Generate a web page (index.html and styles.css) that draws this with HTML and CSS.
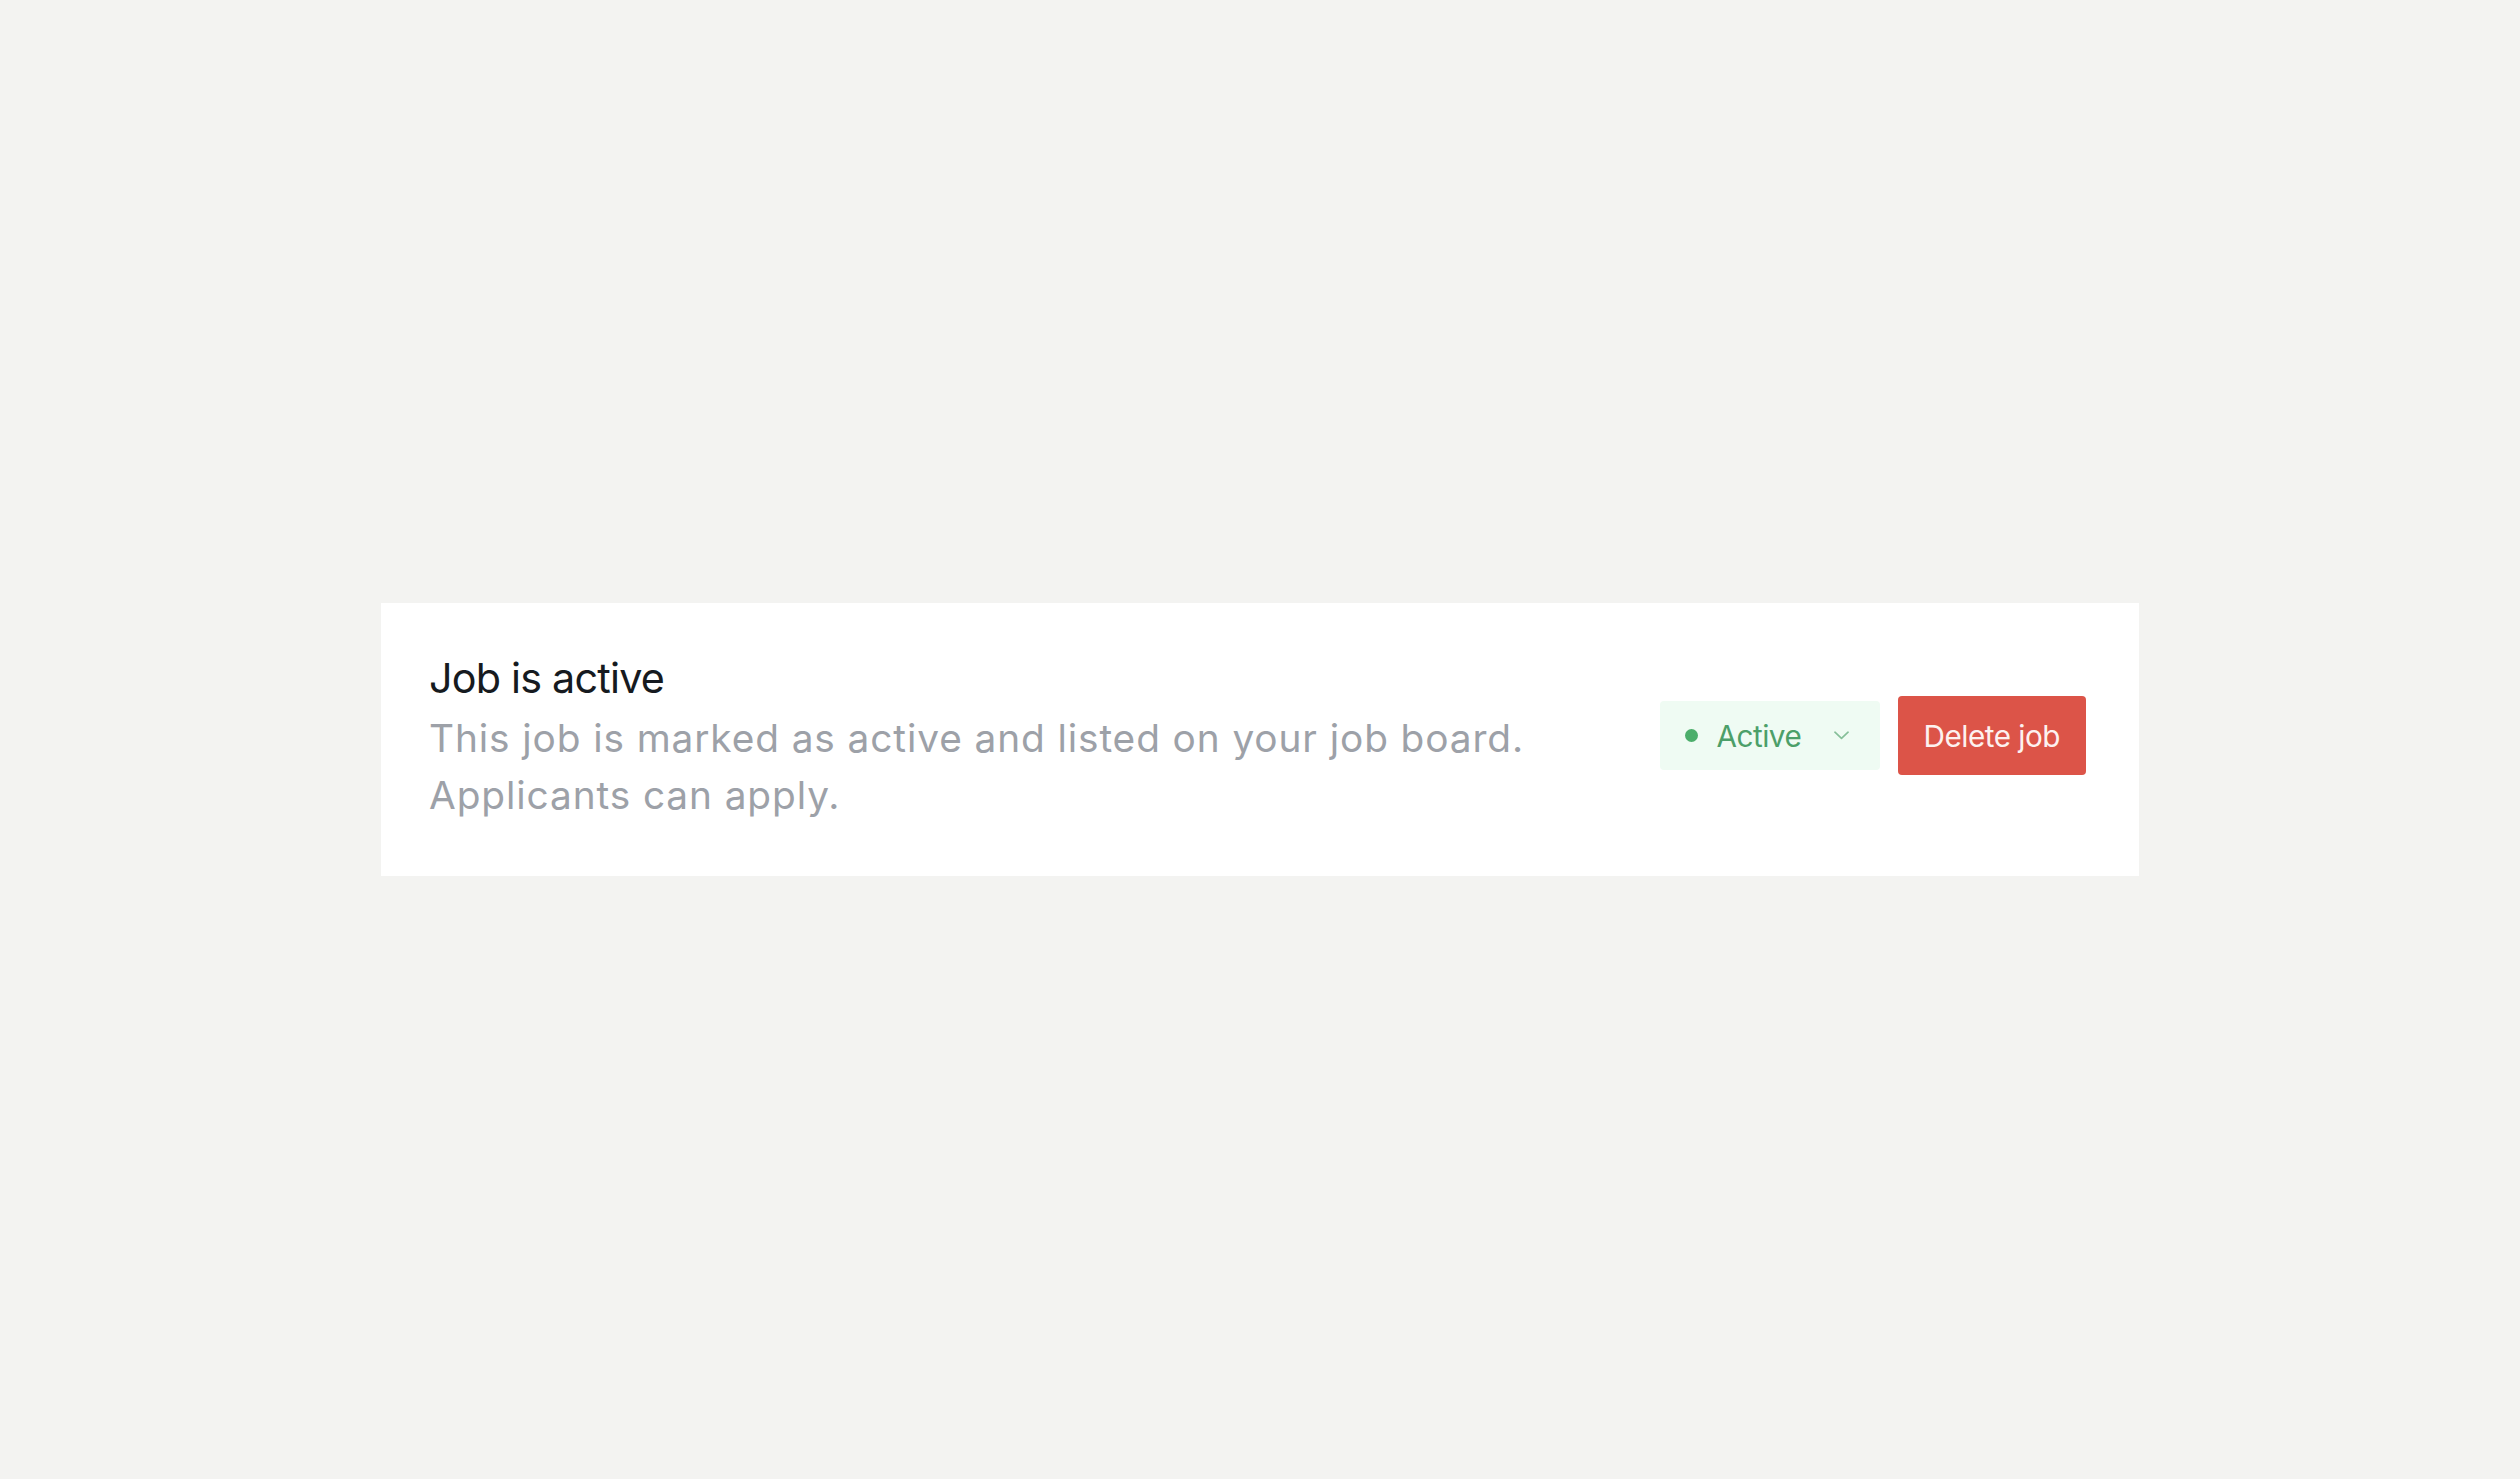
FILE: index.html
```html
<!DOCTYPE html>
<html lang="en">
<head>
<meta charset="utf-8">
<title>Job status</title>
<link rel="stylesheet" href="styles.css">
</head>
<body>
  <main class="page">
    <section class="card">
      <div class="info">
        <h2 class="title">Job is active</h2>
        <p class="desc">This job is marked as active and listed on your job board.<br>Applicants can apply.</p>
      </div>
      <div class="actions">
        <button class="status" type="button">
          <span class="dot"></span>
          <span class="status-label">Active</span>
          <svg class="chevron" viewBox="0 0 16 9" width="15" height="9" aria-hidden="true"><path d="M1 1l7 6.5L15 1" fill="none" stroke="currentColor" stroke-width="1.8" stroke-linecap="round" stroke-linejoin="round"/></svg>
        </button>
        <button class="delete" type="button">Delete job</button>
      </div>
    </section>
  </main>
</body>
</html>
```

FILE: styles.css
```css
html, body {
  margin: 0;
  padding: 0;
}
body {
  background: #f3f3f1;
  font-family: Inter, "Liberation Sans", Arial, sans-serif;
}
.page {
  min-height: 100vh;
  display: flex;
  align-items: center;
  justify-content: center;
}
.card {
  width: 1758px;
  box-sizing: border-box;
  background: #ffffff;
  padding: 45px 53px 53px 48px;
  display: flex;
  align-items: center;
  justify-content: space-between;
}
.info {
  display: flex;
  flex-direction: column;
}
.title {
  margin: 0;
  font-size: 41.3px;
  line-height: 61px;
  font-weight: 400;
  color: #161a20;
  letter-spacing: -0.8px;
}
.desc {
  margin: 0;
  font-size: 38.8px;
  line-height: 57px;
  color: #9da1a8;
  letter-spacing: 0.9px;
}
.actions {
  display: flex;
  align-items: center;
  gap: 18px;
}
.status {
  display: flex;
  align-items: center;
  height: 69px;
  width: 220px;
  box-sizing: border-box;
  padding: 0 31px 0 25px;
  border: none;
  border-radius: 4px;
  background: #effbf3;
  color: #4c9f69;
  font-family: inherit;
  font-size: 29.7px;
  letter-spacing: -0.5px;
  cursor: pointer;
}
.dot {
  width: 13px;
  height: 13px;
  border-radius: 50%;
  background: #4cae6b;
  flex: none;
}
.status-label {
  margin-left: 19px;
  flex: 1;
  text-align: left;
}
.chevron {
  color: #86bf99;
  flex: none;
}
.delete {
  height: 79px;
  padding: 0 26px;
  border: none;
  border-radius: 4px;
  background: #dc5448;
  color: #fdf1f0;
  font-family: inherit;
  font-size: 29.7px;
  letter-spacing: -0.5px;
  cursor: pointer;
}
```
